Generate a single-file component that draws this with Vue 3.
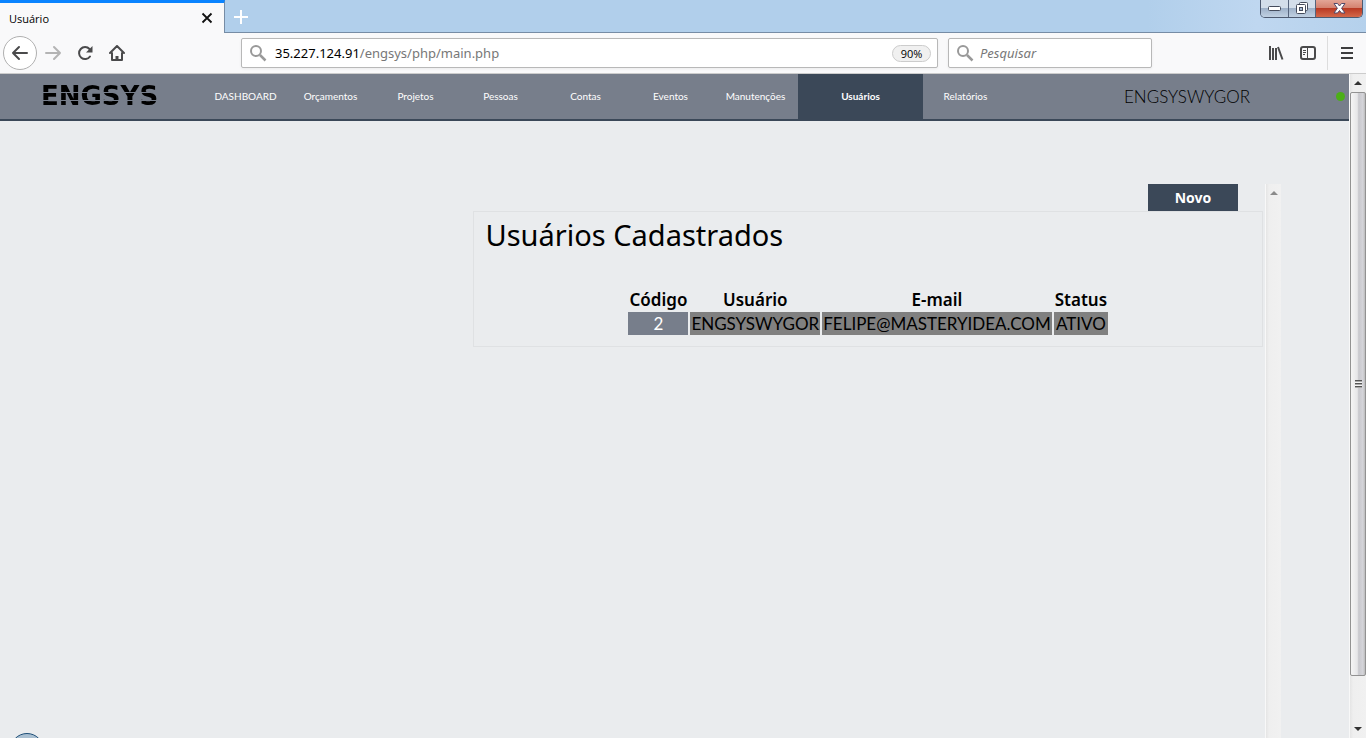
<script setup>
const menu = [
  { label: 'DASHBOARD' },
  { label: 'Orçamentos' },
  { label: 'Projetos' },
  { label: 'Pessoas' },
  { label: 'Contas' },
  { label: 'Eventos' },
  { label: 'Manutenções' },
  { label: 'Usuários', active: true },
  { label: 'Relatórios' },
]
const users = [
  { id: 2, name: 'ENGSYSWYGOR', email: 'FELIPE@MASTERYIDEA.COM', status: 'ATIVO' },
]
</script>

<template>
  <div class="window">
    <header class="titlebar">
      <div class="tab">
        <span class="tab-title">Usuário</span>
        <button class="plain tab-close" aria-label="Fechar aba">
          <svg width="12" height="12" viewBox="0 0 12 12"><path d="M1.5 1.5l9 9M10.5 1.5l-9 9" stroke="#111" stroke-width="1.8" /></svg>
        </button>
      </div>
      <button class="plain new-tab" aria-label="Nova aba">
        <svg width="14" height="14" viewBox="0 0 14 14"><path d="M7 0v14M0 7h14" stroke="#fff" stroke-width="2" /></svg>
      </button>
      <div class="controls">
        <button class="control" aria-label="Minimizar">
          <svg width="13" height="6" viewBox="0 0 13 6"><rect x=".5" y=".5" width="12" height="4" rx="1" fill="#fff" stroke="#454c5c" /></svg>
        </button>
        <button class="control restore" aria-label="Restaurar">
          <svg width="13" height="13" viewBox="0 0 13 13" fill="#fff" stroke="#454c5c"><rect x="3.5" y=".5" width="8" height="8" rx="1" /><rect x=".5" y="2.5" width="9" height="9" rx="1" /><rect x="3.5" y="5.5" width="3" height="3" fill="#a9bdd6" /></svg>
        </button>
        <button class="control close" aria-label="Fechar">
          <svg width="13" height="11" viewBox="0 0 13 11"><path d="M1 .5h3.500l2 2.500 2-2.500H12L8.600 5.300 12 10H8.500l-2-2.500-2 2.500H1l3.400-4.700z" fill="#fff" stroke="#51496a" /></svg>
        </button>
      </div>
    </header>

    <div class="toolbar">
      <button class="plain back" aria-label="Voltar">
        <svg width="18" height="16" viewBox="0 0 18 16" fill="none" stroke="#4a4a4b" stroke-width="2" stroke-linecap="round" stroke-linejoin="round"><path d="M8 2L2 8l6 6M2 8h14" /></svg>
      </button>
      <button class="plain forward" aria-label="Avançar">
        <svg width="18" height="16" viewBox="0 0 18 16" fill="none" stroke="#b4b4b4" stroke-width="2" stroke-linecap="round" stroke-linejoin="round"><path d="M10 2l6 6-6 6M16 8H2" /></svg>
      </button>
      <button class="plain reload" aria-label="Recarregar">
        <svg width="16" height="16" viewBox="0 0 16 16"><path d="M13 11.500A6 6 0 1 1 12.500 4" fill="none" stroke="#4a4a4b" stroke-width="2" stroke-linecap="round" /><path d="M15.500 1v6.500H9z" fill="#4a4a4b" /></svg>
      </button>
      <button class="plain home" aria-label="Página inicial">
        <svg width="16" height="16" viewBox="0 0 16 16" fill="none" stroke="#4a4a4b" stroke-width="2" stroke-linecap="round" stroke-linejoin="round"><path d="M1 8l7-7 7 7M3 8v7h10V8" /><path d="M8 15v-4" stroke-width="3" stroke-linecap="butt" /></svg>
      </button>

      <div class="field address" role="group" aria-label="Endereço">
        <svg width="18" height="18" viewBox="0 0 18 18" fill="none" stroke="#999"><circle cx="6" cy="7" r="5" stroke-width="2" /><path d="M10 11l5.500 5.500" stroke-width="2.500" /></svg>
        <a class="url" href="#">35.227.124.91<span>/engsys/php/main.php</span></a>
        <button class="zoom">90%</button>
      </div>
      <label class="field search">
        <svg width="18" height="18" viewBox="0 0 18 18" fill="none" stroke="#999"><circle cx="6" cy="7" r="5" stroke-width="2" /><path d="M10 11l5.500 5.500" stroke-width="2.500" /></svg>
        <input type="search" placeholder="Pesquisar" aria-label="Pesquisar" />
      </label>

      <div class="tools">
        <button class="plain" aria-label="Biblioteca">
          <svg width="16" height="14" viewBox="0 0 16 14" stroke="#4a4a4b" stroke-width="2"><path d="M2 0v14M5 2v12M8 2v12M10 1l4.500 12.500" /></svg>
        </button>
        <button class="plain" aria-label="Barras laterais">
          <svg width="16" height="14" viewBox="0 0 16 14" fill="none" stroke="#4a4a4b"><rect x="1" y="1" width="14" height="12" rx="2" stroke-width="2" /><path d="M7.500 1v12M3 4.500h3M3 6.500h3M3 8.500h2" /></svg>
        </button>
        <button class="plain menu" aria-label="Abrir menu">
          <svg width="12" height="12" viewBox="0 0 12 12" stroke="#3e3e3f" stroke-width="2"><path d="M0 1h12M0 6h12M0 11h12" /></svg>
        </button>
      </div>
    </div>

    <div class="viewport">
      <div class="page">
        <nav class="nav">
          <a class="logo" href="#"><span>ENGSYS</span></a>
          <ul class="links">
            <li v-for="item in menu" :key="item.label" :class="{ active: item.active }">
              <a href="#">{{ item.label }}</a>
            </li>
          </ul>
          <span class="account">ENGSYSWYGOR</span>
          <span class="online"></span>
        </nav>

        <main class="content">
          <section class="main-column">
            <button class="create">Novo</button>
            <div class="panel">
              <h1>Usuários Cadastrados</h1>
              <table>
                <thead>
                  <tr><th>Código</th><th>Usuário</th><th>E-mail</th><th>Status</th></tr>
                </thead>
                <tbody>
                  <tr v-for="user in users" :key="user.id">
                    <td class="code">{{ user.id }}</td>
                    <td>{{ user.name }}</td>
                    <td>{{ user.email }}</td>
                    <td>{{ user.status }}</td>
                  </tr>
                </tbody>
              </table>
            </div>
          </section>
          <div class="inner-scroll">
            <svg width="8" height="5" viewBox="0 0 8 5"><path d="M4 0l4 4H0z" fill="#8b8b8b" /></svg>
          </div>
        </main>
        <div class="orb"></div>
      </div>

      <div class="scrollbar">
        <svg class="arrow" width="8" height="4" viewBox="0 0 8 4"><path d="M4 0l4 4H0z" fill="#333" /></svg>
        <div class="track">
          <div class="thumb"><span class="grip"></span></div>
        </div>
        <svg class="arrow" width="8" height="4" viewBox="0 0 8 4"><path d="M4 4l4-4H0z" fill="#333" /></svg>
      </div>
    </div>
  </div>
</template>

<style>
html,
body {
  background: #eaecee;
  overflow: hidden;
}
</style>

<style scoped>
* {
  box-sizing: border-box;
}
.window {
  display: flex;
  flex-direction: column;
  height: 100vh;
  font-family: "Noto Sans", "Open Sans", sans-serif;
  color: #000;
}
a {
  color: inherit;
  text-decoration: none;
}
svg {
  display: block;
  flex: none;
}
.plain {
  display: flex;
  align-items: center;
  justify-content: center;
  padding: 0;
  border: 0;
  background: none;
}

.titlebar {
  display: flex;
  flex: none;
  height: 33px;
  background: linear-gradient(90deg, #b1cfeb 0 84%, #bfd7f0 92%, #b5d1ec);
  box-shadow: inset 0 -1px #768ca5;
}
.tab {
  display: flex;
  align-items: center;
  justify-content: space-between;
  width: 225px;
  padding: 0 11px 0 9px;
  border-top: 3px solid #0a84ff;
  border-right: 1px solid #768ca5;
  background: #f9f9fa;
  font-family: "Open Sans", sans-serif;
  font-size: 11px;
}
.new-tab {
  width: 32px;
}
.controls {
  display: flex;
  height: 18px;
  margin-left: auto;
  margin-right: 3px;
  border: 1px solid #4d5a70;
  border-top: 0;
  border-radius: 0 0 5px 5px;
  overflow: hidden;
}
.control {
  display: flex;
  align-items: center;
  justify-content: center;
  width: 28px;
  padding: 0;
  border: 0;
  border-right: 1px solid #56647c;
  background: linear-gradient(#d3deea 0 45%, #9fb2c9 50%, #c0d0e2);
}
.control.restore {
  width: 27px;
}
.control.close {
  width: 46px;
  border-right: 0;
  background: linear-gradient(#e3a596 0, #d58270 45%, #b93a24 50%, #d4684a);
}

.toolbar {
  display: flex;
  flex: none;
  align-items: center;
  height: 41px;
  padding-left: 3px;
  background: #f9f9fa;
  border-bottom: 1px solid #ccc;
}
.back {
  width: 34px;
  height: 34px;
  border: 1px solid #b0b0b0;
  border-radius: 50%;
  background: #fff;
}
.forward,
.reload,
.home {
  width: 32px;
  height: 32px;
}
.field {
  display: flex;
  align-items: center;
  gap: 7px;
  height: 30px;
  padding: 0 6px 0 8px;
  border: 1px solid #b8b8b8;
  border-radius: 2px;
  background: #fff;
  box-shadow: 0 1px 3px rgba(0, 0, 0, 0.06);
  font-size: 13px;
}
.address {
  flex: 1;
  margin-left: 108px;
}
.url {
  flex: 1;
}
.url span {
  color: #777;
}
.zoom {
  width: 39px;
  height: 17px;
  padding: 0;
  border: 1px solid #ccc;
  border-radius: 9px;
  background: #f0f0f0;
  color: #000;
  font: 11px/15px "Open Sans", sans-serif;
}
.search {
  gap: 5px;
  width: 204px;
  margin-left: 10px;
}
.search input {
  flex: 1;
  min-width: 0;
  padding: 0;
  border: 0;
  outline: 0;
  background: none;
  font: italic 13px "Noto Sans", sans-serif;
}
.search input::placeholder {
  color: #777;
}
.tools {
  display: flex;
  align-items: center;
  margin-left: 108px;
}
.tools .plain {
  width: 32px;
  height: 34px;
}
.tools .menu {
  width: 39px;
  margin-left: 3px;
  border-left: 1px solid #ddd;
}

.viewport {
  display: flex;
  flex: 1;
  min-height: 0;
}
.page {
  position: relative;
  display: flex;
  flex: 1;
  flex-direction: column;
  min-width: 0;
  overflow: hidden;
  background: #eaecee;
}
.nav {
  display: flex;
  flex: none;
  align-items: center;
  height: 47px;
  padding: 0 4px 0 41px;
  border-bottom: 2px solid #3b4858;
  background: #777e8b;
}
.logo {
  width: 162px;
  font: bold 26px/45px "DejaVu Sans", sans-serif;
}
.logo span {
  display: block;
  background: linear-gradient(#000 18px, #777e8b 18px 19px, #000 19px 26px, #777e8b 26px 27px, #000 27px);
  background-clip: text;
  color: transparent;
}
.links {
  display: flex;
  height: 45px;
  margin: 0;
  padding: 0;
  list-style: none;
}
.links li {
  width: 85px;
  color: #fff;
  font-family: Lato, sans-serif;
  font-size: 10px;
  line-height: 45px;
  text-align: center;
}
.links .active {
  width: 125px;
  background: #3b4858;
  font-weight: bold;
}
.account {
  flex: 1;
  padding-left: 30px;
  font-family: Lato, sans-serif;
  font-size: 17px;
  font-weight: 300;
  text-align: center;
}
.online {
  width: 9px;
  height: 9px;
  border-radius: 50%;
  background: #4caf17;
}

.content {
  display: flex;
  flex: 1;
  gap: 2px;
  margin: 63px 68px 0 35.1%;
}
.main-column {
  display: flex;
  flex: 1;
  flex-direction: column;
}
.create {
  align-self: flex-end;
  width: 90px;
  height: 27px;
  margin-right: 25px;
  padding: 0;
  border: 0;
  background: #3b4858;
  color: #fff;
  font: bold 14px/27px "Noto Sans", sans-serif;
}
.panel {
  padding: 3px 11px 10px;
  border: 1px solid #dfe1e3;
}
h1 {
  margin: 0 0 33px;
  font-size: 29px;
  font-weight: 400;
  line-height: 39px;
}
table {
  margin: 0 auto;
  border-spacing: 2px 1px;
  font-size: 17px;
  line-height: 23px;
  text-align: center;
}
th {
  padding: 0 1px;
  font-weight: 600;
}
td {
  padding: 0 1px;
  background: #808080;
  font-family: Lato, sans-serif;
}
td.code {
  background: #777e8b;
  color: #fff;
}
.inner-scroll {
  display: flex;
  justify-content: center;
  width: 16px;
  padding-top: 7px;
  border-left: 1px solid #f8f8f8;
  background: linear-gradient(90deg, #e5e5e5, #efefef 20%, #f1f1f1);
}
.orb {
  position: absolute;
  bottom: -29px;
  left: 10px;
  width: 34px;
  height: 34px;
  border: 1px solid #1e4f78;
  border-radius: 50%;
  background: #a9bfd1;
}

.scrollbar {
  display: flex;
  flex-direction: column;
  align-items: center;
  width: 17px;
  border-left: 1px solid #f8f8f8;
  background: linear-gradient(90deg, #e5e5e5, #efefef 20%, #f1f1f1);
}
.arrow {
  margin: 7px 0;
}
.track {
  flex: 1;
  align-self: stretch;
}
.thumb {
  display: flex;
  align-items: center;
  justify-content: center;
  height: 93%;
  border: 1px solid #929292;
  border-radius: 2px;
  background: linear-gradient(90deg, #f5f5f5, #e6e6e8 45%, #c8c8cd 55%, #d5d5da 85%, #bbb);
}
.grip {
  width: 7px;
  height: 8px;
  background: repeating-linear-gradient(#555 0 1px, #aaa 1px 2px, #f5f5f5 2px 3px);
}
</style>
